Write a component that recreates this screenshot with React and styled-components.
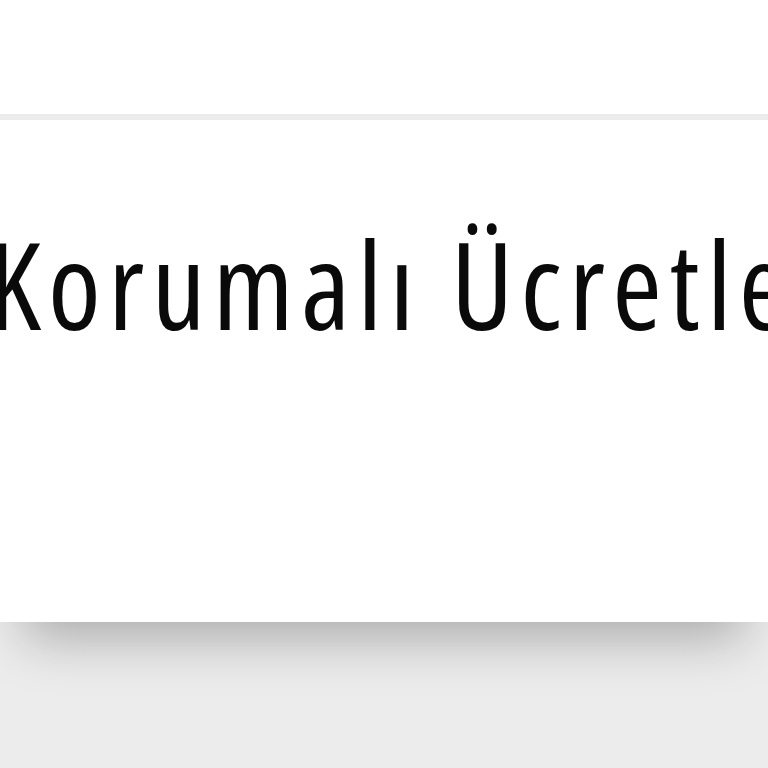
import React from "react";
import styled, { createGlobalStyle } from "styled-components";

const GlobalStyle = createGlobalStyle`
  html, body {
    margin: 0;
    padding: 0;
    background: #ececec;
    overflow: hidden;
  }
  body {
    font-family: "Open Sans", "Noto Sans", sans-serif;
  }
`;

const Page = styled.div`
  display: flex;
  flex-direction: column;
  width: 100%;
  height: 768px;
  background: #ececec;
`;

const TopBar = styled.header`
  height: 114px;
  background: #ffffff;
  border-bottom: 6px solid #ececec;
  box-shadow: 0 2px 3px rgba(0, 0, 0, 0.03);
`;

const Card = styled.section`
  height: 502px;
  background: #ffffff;
  box-shadow: 0 40px 50px -24px rgba(0, 0, 0, 0.28);
  display: flex;
  align-items: flex-start;
  overflow: hidden;
`;

const Title = styled.h1`
  margin: 104px 0 0 -12px;
  font-size: 120px;
  font-weight: 400;
  font-stretch: condensed;
  letter-spacing: 7.3px;
  line-height: 1;
  color: #0a0a0a;
  white-space: nowrap;
`;

export default function App() {
  return (
    <>
      <GlobalStyle />
      <Page>
        <TopBar />
        <Card>
          <Title>Korumalı Ücretleri</Title>
        </Card>
      </Page>
    </>
  );
}
